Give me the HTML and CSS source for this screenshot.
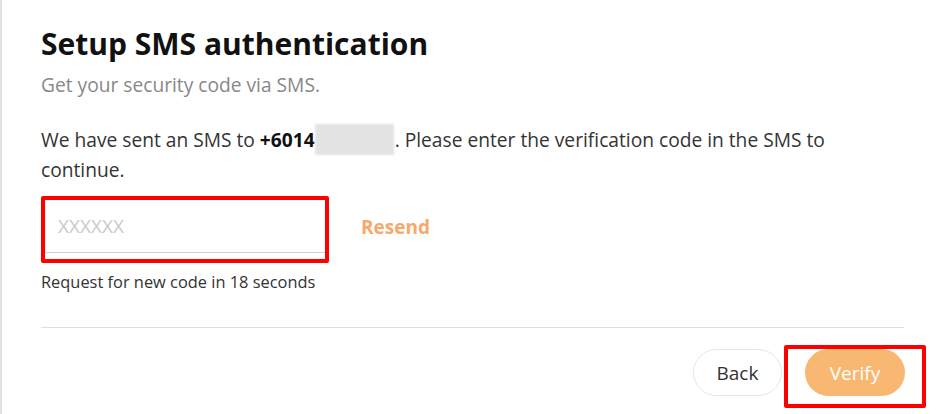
FILE: index.html
```html
<!DOCTYPE html>
<html lang="en">
<head>
    <meta charset="UTF-8">
    <meta name="viewport" content="width=device-width, initial-scale=1.0">
    <title>Setup SMS authentication</title>
    <link rel="stylesheet" href="styles.css">
</head>
<body>
    <main class="panel">
        <h1>Setup SMS authentication</h1>
        <p class="subtitle">Get your security code via SMS.</p>

        <p class="message">We have sent an SMS to <strong>+6014</strong><span class="masked"></span>. Please enter the verification code in the SMS to continue.</p>

        <div class="code-row">
            <div class="highlight input-box">
                <input type="text" class="code-input" placeholder="XXXXXX">
            </div>
            <a href="#" class="resend">Resend</a>
        </div>
        <p class="countdown">Request for new code in 18 seconds</p>

        <hr class="divider">

        <div class="actions">
            <button type="button" class="btn btn-back">Back</button>
            <div class="highlight verify-box">
                <button type="submit" class="btn btn-verify">Verify</button>
            </div>
        </div>
    </main>
</body>
</html>
```

FILE: styles.css
```css
/* Basic Reset */
* {
    margin: 0;
    padding: 0;
    box-sizing: border-box;
}

html, body {
    font-family: 'Open Sans', 'Noto Sans', sans-serif;
    background-color: #fff;
    color: #333;
    height: 100%;
    overflow: hidden;
}

/* Panel */
.panel {
    height: 100%;
    border-left: 2px solid #e2e2e2;
    padding: 26px 0 0 39px;
    width: 906px;
}

.panel h1 {
    font-size: 30px;
    font-weight: 700;
    color: #111;
    line-height: 36px;
}

.subtitle {
    margin-top: 10px;
    font-size: 19.2px;
    color: #888;
    line-height: 26px;
}

.message {
    margin-top: 26px;
    font-size: 19.2px;
    line-height: 29px;
    color: #333;
}

.message strong {
    color: #111;
}

.masked {
    display: inline-block;
    width: 79px;
    height: 31px;
    margin-right: 1px;
    vertical-align: -8px;
    background-color: #e3e3e3;
    filter: blur(1px);
}

/* Code input */
.code-row {
    display: flex;
    align-items: center;
    margin-top: 12px;
}

.highlight {
    border: 4px solid #ff0000;
    border-radius: 2px;
}

.input-box {
    width: 288px;
    height: 67px;
    padding: 0 0 6px 0;
}

.code-input {
    width: 100%;
    height: 100%;
    border: none;
    border-bottom: 1px solid #cfcfcf;
    border-left: 1px solid #f2f2f2;
    padding: 0 12px;
    font-family: inherit;
    font-size: 19px;
    color: #333;
    outline: none;
}

.code-input::placeholder {
    color: #c9c9c9;
}

.resend {
    margin-left: 32px;
    margin-top: -5px;
    font-size: 19px;
    font-weight: 700;
    color: #f7a86a;
    text-decoration: none;
}

.countdown {
    margin-top: 8px;
    font-size: 16.4px;
    color: #333;
    line-height: 22px;
}

.divider {
    margin-top: 34px;
    width: 863px;
    border: none;
    border-top: 1px solid #e0e0e0;
}

/* Buttons */
.actions {
    display: flex;
    justify-content: flex-end;
    align-items: flex-start;
    margin-top: 17px;
    width: 885px;
}

.btn {
    height: 47px;
    border-radius: 24px;
    font-family: inherit;
    font-size: 19px;
    cursor: pointer;
}

.btn-back {
    width: 89px;
    margin-top: 4px;
    margin-right: 2px;
    background-color: #fff;
    border: 1px solid #e6e6e6;
    color: #333;
}

.verify-box {
    padding: 0 17px 8px 17px;
}

.btn-verify {
    width: 100px;
    background-color: #f8b872;
    border: none;
    color: #fff;
}
```
